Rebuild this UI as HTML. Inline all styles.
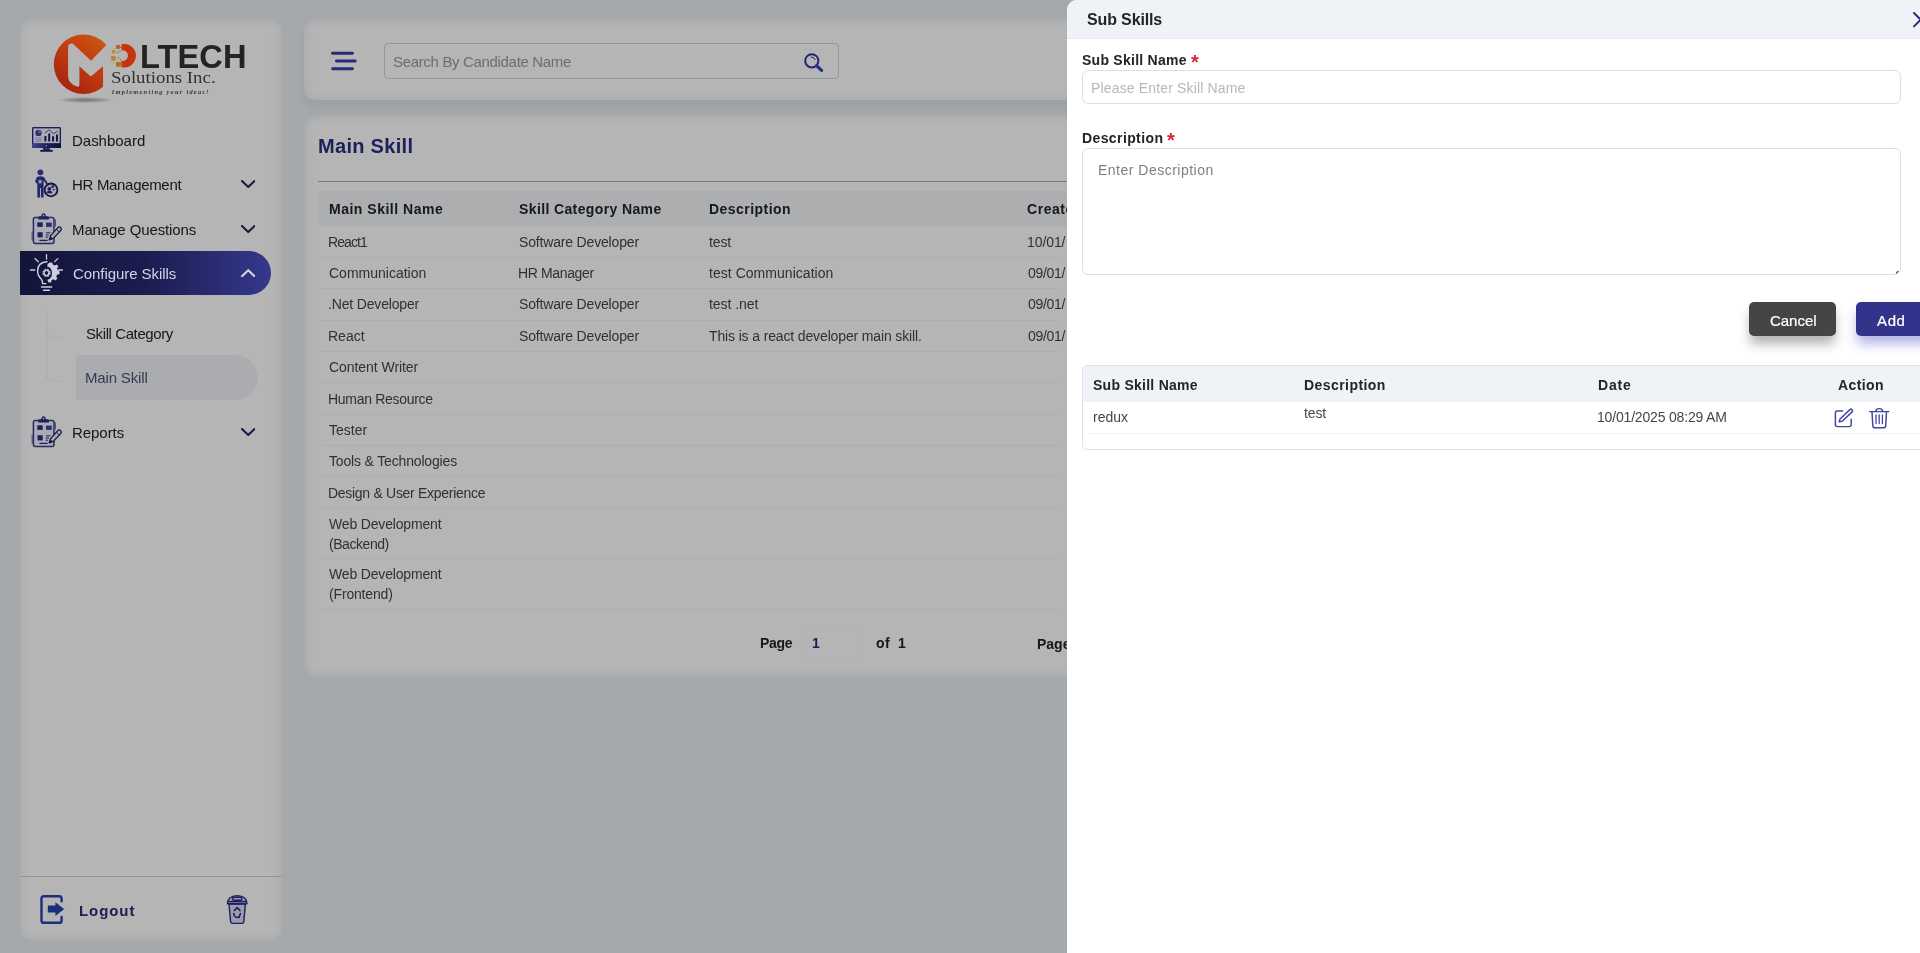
<!DOCTYPE html>
<html lang="en"><head><meta charset="utf-8"><title>Main Skill - Sub Skills</title>
<style>
*{box-sizing:border-box;margin:0;padding:0}
html,body{width:1920px;height:953px;overflow:hidden}
body{background:#e9eef3;font-family:'Liberation Sans',sans-serif;position:relative;color:#212529}
.t{position:absolute;white-space:nowrap;will-change:transform}
.abs{position:absolute}
.card{position:absolute;background:#fff;border-radius:10px;box-shadow:inset 0 0 10px 0 rgba(205,214,226,.55)}
#overlay{position:absolute;left:0;top:0;width:1920px;height:953px;background:rgba(0,0,0,.29)}
#panel{position:absolute;left:1067px;top:0;width:900px;height:953px;background:#fff;border-top-left-radius:10px;overflow:hidden}
.line{position:absolute;height:1px;background:#f4f4f6}
</style></head><body>
<aside id="sidebar">

<div class="card" style="left:20px;top:20px;width:262px;height:920px"></div>
<!-- active item -->
<div class="abs" style="left:20px;top:250.5px;width:251px;height:44.5px;border-radius:0 22.5px 22.5px 0;background:linear-gradient(90deg,#1c1d52 0%,#272970 50%,#4b50c6 100%)"></div>
<!-- sub active -->
<div class="abs" style="left:76px;top:355px;width:182px;height:45px;border-radius:0 22.5px 22.5px 0;background:#f1f2f7"></div>
<!-- tree lines -->
<svg class="abs" style="left:40px;top:305px" width="40" height="90" viewBox="0 0 40 90"><path d="M6.5 5 V25 Q6.5 33 14.5 33 H22 M6.5 25 V68 Q6.5 76 14.5 76 H22" fill="none" stroke="#f1f1f4" stroke-width="1.2"/></svg>
<div class="t" style="left:72.20px;top:129.70px;font-size:15px;line-height:21px;font-weight:400;color:#212529;letter-spacing:-0.017px;">Dashboard</div>
<div class="t" style="left:72.20px;top:173.90px;font-size:15px;line-height:21px;font-weight:400;color:#212529;letter-spacing:-0.318px;">HR Management</div>
<div class="t" style="left:72.20px;top:218.60px;font-size:15px;line-height:21px;font-weight:400;color:#212529;letter-spacing:-0.107px;">Manage Questions</div>
<div class="t" style="left:85.60px;top:323.30px;font-size:15px;line-height:21px;font-weight:400;color:#212529;letter-spacing:-0.403px;">Skill Category</div>
<div class="t" style="left:85.00px;top:367.20px;font-size:15px;line-height:21px;font-weight:400;color:#4d5274;letter-spacing:-0.161px;">Main Skill</div>
<div class="t" style="left:72.20px;top:421.60px;font-size:15px;line-height:21px;font-weight:400;color:#212529;letter-spacing:-0.054px;">Reports</div>
<svg class="abs" style="left:240.8px;top:180.3px" width="14.5" height="8.4" viewBox="0 0 14.5 8.4"><path d="M1 1 L7.25 7 L13.5 1" fill="none" stroke="#23265f" stroke-width="2.1" stroke-linecap="round" stroke-linejoin="round"/></svg>
<svg class="abs" style="left:240.8px;top:224.7px" width="14.5" height="8.4" viewBox="0 0 14.5 8.4"><path d="M1 1 L7.25 7 L13.5 1" fill="none" stroke="#23265f" stroke-width="2.1" stroke-linecap="round" stroke-linejoin="round"/></svg>
<svg class="abs" style="left:240.8px;top:427.6px" width="14.5" height="8.4" viewBox="0 0 14.5 8.4"><path d="M1 1 L7.25 7 L13.5 1" fill="none" stroke="#23265f" stroke-width="2.1" stroke-linecap="round" stroke-linejoin="round"/></svg>
<div class="abs" style="left:20px;top:876px;width:262px;height:1.3px;background:#d4d4d6"></div>
<div class="t" style="left:78.80px;top:899.70px;font-size:15px;line-height:21px;font-weight:700;color:#2a2d72;letter-spacing:0.917px;">Logout</div>


<!-- dashboard -->
<svg class="abs" style="left:28px;top:122px" width="40" height="34" viewBox="28 122 40 34">
<defs><linearGradient id="bz" x1="0" y1="0" x2="1" y2="0"><stop offset="0" stop-color="#5e61c6"/><stop offset="0.5" stop-color="#2b2e83"/><stop offset="1" stop-color="#14164c"/></linearGradient></defs>
<rect x="32" y="127" width="29" height="21" rx="1.4" fill="#2b2e83"/>
<rect x="33.4" y="128.4" width="26.2" height="15" fill="#f3f3ff"/>
<rect x="32" y="143.4" width="29" height="4.6" fill="url(#bz)"/>
<circle cx="46.4" cy="145.7" r="0.7" fill="#d6d6f2"/>
<path d="M43.4 148 H49.6 L50.6 150.2 H42.4 Z" fill="#3a3d9c"/>
<rect x="40.2" y="150" width="12.6" height="1.8" rx="0.6" fill="#1d1f5c"/>
<circle cx="38.5" cy="132.9" r="3.2" fill="#4145a8"/>
<path d="M38.5 132.9 V129.7 A3.2 3.2 0 0 1 41.7 132.9 Z" fill="#7f82d6"/>
<path d="M35.2 137.8 H41.6 M35.2 139.6 H41.6 M35.2 141.3 H41.6" stroke="#a9abdf" stroke-width="0.9"/>
<path d="M45.4 136 V141.4 M49.2 133.4 V141.4 M53.1 136.2 V141.4 M57 134.4 V141.4" stroke="#1d1f5c" stroke-width="2"/>
<path d="M44.6 133.2 L49 129.9 L53.4 133.6 L57.6 131.4" fill="none" stroke="#2b2e83" stroke-width="0.8"/>
</svg>
<!-- HR -->
<svg class="abs" style="left:28px;top:166px" width="40" height="36" viewBox="28 166 40 36">
<circle cx="40.4" cy="172.3" r="2.9" fill="#3a3fae"/>
<path d="M36.9 177 Q40.4 175.6 43.8 177 L48 183.6 L46.6 184.6 L43.6 180.6 V197.6 H40.9 V188 H40 V197.6 H37.3 V184 L35 181.6 Z" fill="#34389a"/>
<path d="M38.6 180 H41.6 V183.4 H38.6 Z" fill="#d9daf5"/>
<circle cx="51" cy="189.9" r="6.4" fill="#ececfc" stroke="#1d1f5c" stroke-width="1.8"/>
<circle cx="49.4" cy="188.8" r="1.9" fill="#2b2e83"/>
<circle cx="52.7" cy="186.6" r="1.4" fill="#2b2e83"/>
<circle cx="53.8" cy="189.6" r="0.9" fill="#2b2e83"/>
<path d="M46.4 193.2 Q46.6 190.8 49.4 190.8 Q52.2 190.8 52.6 193.2 Z" fill="#2b2e83"/>
</svg>

<svg class="abs" style="left:28px;top:208px" width="40" height="40" viewBox="28 208 40 40">
<rect x="31.4" y="231.5" width="2.4" height="9" fill="#9a9cd2"/>
<rect x="33.4" y="217.4" width="20.6" height="26" rx="1.8" fill="#f3f3ff" stroke="#3a3d8f" stroke-width="1.5"/>
<rect x="54.4" y="219.5" width="1.6" height="7" fill="#6c6fb8"/>
<path d="M38.3 219.6 V217.6 Q38.3 216.4 39.6 216.3 L41.3 216.2 Q41.6 213.2 43.6 213.2 Q45.6 213.2 45.9 216.2 L47.6 216.3 Q48.9 216.4 48.9 217.6 V219.6 Z" fill="#2b2e83"/>
<circle cx="43.6" cy="215.6" r="0.8" fill="#f3f3ff"/>
<rect x="37.3" y="222.3" width="5.4" height="4.6" fill="#2b2e83"/>
<rect x="46" y="222.6" width="5.8" height="4.3" fill="#3f43a0"/>
<rect x="37.5" y="232.2" width="5.2" height="5.2" fill="#2b2e83"/>
<path d="M46 232.8 H50.4 M45.6 235 H49 M45.6 237.2 H48" stroke="#2b2e83" stroke-width="1"/>
<path d="M39.4 240.4 H47.6" stroke="#2b2e83" stroke-width="1.3"/>
<path d="M49.2 239.9 L50.6 235.6 L57.8 227.6 Q59.4 226.2 60.8 227.6 Q62.1 229.1 60.7 230.6 L53.3 238.4 Z" fill="#ececfc" stroke="#1d1f5c" stroke-width="1.3" stroke-linejoin="round"/>
<path d="M49.2 239.9 L50.4 236.2 L52.8 238.6 Z" fill="#1d1f5c"/>
<path d="M56.4 229.2 L59.3 232" stroke="#1d1f5c" stroke-width="1"/>
</svg>

<svg class="abs" style="left:28px;top:411.1px" width="40" height="40" viewBox="28 208 40 40">
<rect x="31.4" y="231.5" width="2.4" height="9" fill="#9a9cd2"/>
<rect x="33.4" y="217.4" width="20.6" height="26" rx="1.8" fill="#f3f3ff" stroke="#3a3d8f" stroke-width="1.5"/>
<rect x="54.4" y="219.5" width="1.6" height="7" fill="#6c6fb8"/>
<path d="M38.3 219.6 V217.6 Q38.3 216.4 39.6 216.3 L41.3 216.2 Q41.6 213.2 43.6 213.2 Q45.6 213.2 45.9 216.2 L47.6 216.3 Q48.9 216.4 48.9 217.6 V219.6 Z" fill="#2b2e83"/>
<circle cx="43.6" cy="215.6" r="0.8" fill="#f3f3ff"/>
<rect x="37.3" y="222.3" width="5.4" height="4.6" fill="#2b2e83"/>
<rect x="46" y="222.6" width="5.8" height="4.3" fill="#3f43a0"/>
<rect x="37.5" y="232.2" width="5.2" height="5.2" fill="#2b2e83"/>
<path d="M46 232.8 H50.4 M45.6 235 H49 M45.6 237.2 H48" stroke="#2b2e83" stroke-width="1"/>
<path d="M39.4 240.4 H47.6" stroke="#2b2e83" stroke-width="1.3"/>
<path d="M49.2 239.9 L50.6 235.6 L57.8 227.6 Q59.4 226.2 60.8 227.6 Q62.1 229.1 60.7 230.6 L53.3 238.4 Z" fill="#ececfc" stroke="#1d1f5c" stroke-width="1.3" stroke-linejoin="round"/>
<path d="M49.2 239.9 L50.4 236.2 L52.8 238.6 Z" fill="#1d1f5c"/>
<path d="M56.4 229.2 L59.3 232" stroke="#1d1f5c" stroke-width="1"/>
</svg>
<!-- logout -->
<svg class="abs" style="left:36px;top:890px" width="34" height="38" viewBox="36 890 34 38">
<path d="M61.6 901.2 V898.6 Q61.6 896.2 59.2 896.2 H43.9 Q41.5 896.2 41.5 898.6 V920.4 Q41.5 922.8 43.9 922.8 H59.2 Q61.6 922.8 61.6 920.4 V917" fill="none" stroke="#2743b0" stroke-width="2.4" stroke-linecap="round"/>
<path d="M47.8 905.6 H55.4 V902.2 L64.2 909.1 L55.4 916 V912.6 H47.8 Z" fill="#2743b0"/>
</svg>
<!-- bin -->
<svg class="abs" style="left:222px;top:890px" width="30" height="38" viewBox="222 890 30 38">
<g fill="#dcdcf6" stroke="#2b2e83" stroke-width="1.4" stroke-linejoin="round">
<path d="M229 904 L230.6 921.6 Q230.8 923.4 232.6 923.4 H241.8 Q243.6 923.4 243.8 921.6 L245.4 904 Z"/>
<path d="M227.4 903.8 Q227.4 896 237.2 895.6 Q247 896 247 903.8 Z"/>
<rect x="232.4" y="897.2" width="9.6" height="3" rx="1.4"/>
</g>
<path d="M227.6 901.6 H246.8" stroke="#2b2e83" stroke-width="1.6"/>
<path d="M234 911 L237.2 907.6 L240.4 911 M240.6 913 L239 917.4 L235 917 M233.6 913 L234.6 916.6" fill="none" stroke="#1d1f5c" stroke-width="1.5"/>
</svg>

</aside>
<header id="topbar">

<div class="card" style="left:304px;top:20px;width:1600px;height:80px;box-shadow:inset 0 0 10px 0 rgba(205,214,226,.55),0 8px 10px rgba(120,135,150,.11)"></div>
<svg class="abs" style="left:330px;top:50px" width="28" height="22" viewBox="0 0 28 22"><g stroke="#383cab" stroke-width="2.9" stroke-linecap="round"><path d="M2.6 3.3H22.5"/><path d="M6.4 11H25.2"/><path d="M2.6 18.8H22.5"/></g></svg>
<div class="abs" style="left:384px;top:43px;width:455px;height:35.5px;border:1.4px solid #d3d3d6;border-radius:4px;background:#fff"></div>
<div class="t" style="left:393.00px;top:51.00px;font-size:15px;line-height:21px;font-weight:400;color:#9a9a9d;letter-spacing:-0.330px;">Search By Candidate Name</div>
<svg class="abs" style="left:802px;top:51px" width="24" height="24" viewBox="0 0 24 24"><circle cx="9.8" cy="9.8" r="6.6" fill="none" stroke="#2f379f" stroke-width="2"/><path d="M14.6 14.8 L19.6 19.4" stroke="#3a44c4" stroke-width="3.2" stroke-linecap="round"/><path d="M8.8 6 Q12.2 5.6 13.2 9" fill="none" stroke="#2d3186" stroke-width="1"/></svg>

</header>
<main id="content">

<div class="card" style="left:304.5px;top:115.5px;width:1600px;height:560px"></div>
<div class="t" style="left:317.60px;top:131.67px;font-size:20px;line-height:28px;font-weight:700;color:#2b2e7e;letter-spacing:0.301px;">Main Skill</div>
<div class="abs" style="left:318px;top:180.5px;width:1590px;height:1.3px;background:#a9abaf"></div>
<div class="abs" style="left:318px;top:190.6px;width:1590px;height:35.8px;background:#f4f5f8;border-radius:4px 0 0 0"></div>
<div class="t" style="left:328.60px;top:199.35px;font-size:14px;line-height:20px;font-weight:700;color:#212529;letter-spacing:0.507px;">Main Skill Name</div>
<div class="t" style="left:518.60px;top:199.35px;font-size:14px;line-height:20px;font-weight:700;color:#212529;letter-spacing:0.378px;">Skill Category Name</div>
<div class="t" style="left:709.00px;top:199.35px;font-size:14px;line-height:20px;font-weight:700;color:#212529;letter-spacing:0.454px;">Description</div>
<div class="t" style="left:1027.40px;top:199.35px;font-size:14px;line-height:20px;font-weight:700;color:#212529;letter-spacing:0.55px;">Created Date</div>
<div class="t" style="left:327.60px;top:231.75px;font-size:14px;line-height:20px;font-weight:400;color:#43464b;letter-spacing:-0.914px;">React1</div><div class="t" style="left:518.60px;top:231.75px;font-size:14px;line-height:20px;font-weight:400;color:#43464b;letter-spacing:-0.170px;">Software Developer</div><div class="t" style="left:709.00px;top:231.75px;font-size:14px;line-height:20px;font-weight:400;color:#43464b;letter-spacing:-0.125px;">test</div><div class="t" style="left:1026.80px;top:231.75px;font-size:14px;line-height:20px;font-weight:400;color:#43464b;letter-spacing:-0.087px;">10/01/</div><div class="line" style="left:321px;top:256.9px;width:737px"></div><div class="t" style="left:328.60px;top:263.11px;font-size:14px;line-height:20px;font-weight:400;color:#43464b;letter-spacing:0.002px;">Communication</div><div class="t" style="left:517.60px;top:263.11px;font-size:14px;line-height:20px;font-weight:400;color:#43464b;letter-spacing:-0.367px;">HR Manager</div><div class="t" style="left:709.00px;top:263.11px;font-size:14px;line-height:20px;font-weight:400;color:#43464b;letter-spacing:0.039px;">test Communication</div><div class="t" style="left:1027.80px;top:263.11px;font-size:14px;line-height:20px;font-weight:400;color:#43464b;letter-spacing:-0.287px;">09/01/</div><div class="line" style="left:321px;top:288.2px;width:737px"></div><div class="t" style="left:327.60px;top:294.47px;font-size:14px;line-height:20px;font-weight:400;color:#43464b;letter-spacing:-0.163px;">.Net Developer</div><div class="t" style="left:518.60px;top:294.47px;font-size:14px;line-height:20px;font-weight:400;color:#43464b;letter-spacing:-0.170px;">Software Developer</div><div class="t" style="left:709.00px;top:294.47px;font-size:14px;line-height:20px;font-weight:400;color:#43464b;letter-spacing:-0.040px;">test .net</div><div class="t" style="left:1027.80px;top:294.47px;font-size:14px;line-height:20px;font-weight:400;color:#43464b;letter-spacing:-0.287px;">09/01/</div><div class="line" style="left:321px;top:319.6px;width:737px"></div><div class="t" style="left:327.60px;top:325.83px;font-size:14px;line-height:20px;font-weight:400;color:#43464b;">React</div><div class="t" style="left:518.60px;top:325.83px;font-size:14px;line-height:20px;font-weight:400;color:#43464b;letter-spacing:-0.170px;">Software Developer</div><div class="t" style="left:709.00px;top:325.83px;font-size:14px;line-height:20px;font-weight:400;color:#43464b;letter-spacing:-0.138px;">This is a react developer main skill.</div><div class="t" style="left:1027.80px;top:325.83px;font-size:14px;line-height:20px;font-weight:400;color:#43464b;letter-spacing:-0.287px;">09/01/</div><div class="line" style="left:321px;top:350.9px;width:737px"></div><div class="t" style="left:328.60px;top:357.19px;font-size:14px;line-height:20px;font-weight:400;color:#43464b;letter-spacing:-0.056px;">Content Writer</div><div class="line" style="left:321px;top:382.3px;width:737px"></div><div class="t" style="left:327.60px;top:388.55px;font-size:14px;line-height:20px;font-weight:400;color:#43464b;letter-spacing:-0.296px;">Human Resource</div><div class="line" style="left:321px;top:413.7px;width:737px"></div><div class="t" style="left:328.60px;top:419.91px;font-size:14px;line-height:20px;font-weight:400;color:#43464b;">Tester</div><div class="line" style="left:321px;top:445.0px;width:737px"></div><div class="t" style="left:328.60px;top:451.27px;font-size:14px;line-height:20px;font-weight:400;color:#43464b;letter-spacing:-0.164px;">Tools &amp; Technologies</div><div class="line" style="left:321px;top:476.4px;width:737px"></div><div class="t" style="left:327.60px;top:482.63px;font-size:14px;line-height:20px;font-weight:400;color:#43464b;letter-spacing:-0.291px;">Design &amp; User Experience</div><div class="line" style="left:321px;top:507.7px;width:737px"></div><div class="t" style="left:328.60px;top:513.55px;font-size:14px;line-height:20px;font-weight:400;color:#43464b;letter-spacing:-0.166px;">Web Development</div><div class="t" style="left:329.20px;top:533.55px;font-size:14px;line-height:20px;font-weight:400;color:#43464b;letter-spacing:-0.443px;">(Backend)</div><div class="line" style="left:321px;top:558.4px;width:737px"></div><div class="t" style="left:328.60px;top:563.95px;font-size:14px;line-height:20px;font-weight:400;color:#43464b;letter-spacing:-0.166px;">Web Development</div><div class="t" style="left:329.20px;top:583.95px;font-size:14px;line-height:20px;font-weight:400;color:#43464b;letter-spacing:-0.166px;">(Frontend)</div><div class="line" style="left:321px;top:609.3px;width:737px"></div><div class="t" style="left:759.60px;top:633.45px;font-size:14px;line-height:20px;font-weight:700;color:#212529;letter-spacing:-0.292px;">Page</div><div class="t" style="left:811.50px;top:633.45px;font-size:14px;line-height:20px;font-weight:700;color:#2b2e7e;">1</div><div class="t" style="left:875.60px;top:633.45px;font-size:14px;line-height:20px;font-weight:700;color:#212529;letter-spacing:0.448px;">of</div><div class="t" style="left:898.00px;top:633.45px;font-size:14px;line-height:20px;font-weight:700;color:#212529;">1</div><div class="t" style="left:1036.50px;top:634.45px;font-size:14px;line-height:20px;font-weight:700;color:#212529;">Page Size</div><div class="abs" style="left:802px;top:624px;width:61px;height:35px;border:1px solid #fafafb;border-radius:4px"></div>
</main>
<div id="overlay"></div>
<div id="brand">

<svg class="abs" style="left:40px;top:25px" width="220" height="85" viewBox="40 25 220 85">
<defs>
<linearGradient id="lg1" x1="0.9" y1="0" x2="0.15" y2="1"><stop offset="0" stop-color="#c85c14"/><stop offset="0.4" stop-color="#c44010"/><stop offset="1" stop-color="#a42010"/></linearGradient>
<radialGradient id="sh" cx="0.5" cy="0.5" r="0.5"><stop offset="0" stop-color="#000" stop-opacity=".36"/><stop offset="0.6" stop-color="#000" stop-opacity=".18"/><stop offset="1" stop-color="#000" stop-opacity="0"/></radialGradient>
</defs>
<ellipse cx="85.5" cy="100" rx="28" ry="3" fill="url(#sh)"/>
<mask id="mk"><rect x="40" y="25" width="220" height="85" fill="#fff"/><path d="M72.7 43.6 L91 60.7 L106.3 45 L118 40 L118 100 L103 100 L103 66.2 L90.8 76.4 L79.4 66.2 L79.4 85 Q79.4 87.4 77 86.6 Q68.1 83.6 68.1 76 V47.5 Q68.1 43 72.7 43.6 Z" fill="#000"/></mask>
<circle cx="83.6" cy="64.3" r="29.8" fill="url(#lg1)" mask="url(#mk)"/>
<path d="M121.5 44.2 A11.8 11.8 0 1 1 121.5 67.2 L121.5 61 A5.4 5.4 0 1 0 121.5 50.4 Z" fill="#c6340f"/>
<rect x="116" y="45" width="3.9" height="3.9" fill="#b3632e"/>
<rect x="111.9" y="50" width="3.5" height="3.5" fill="#bd8a34"/>
<rect x="111.2" y="56" width="4.3" height="4.7" fill="#b98628"/>
<rect x="116" y="62" width="5" height="4.8" fill="#be6c1e"/>
<rect x="120.2" y="46.6" width="1.3" height="1.3" fill="#a8501e"/><rect x="119.4" y="50.4" width="1.2" height="1.2" fill="#9a6a28"/>
<rect x="117.2" y="51.8" width="1.3" height="1.3" fill="#8a6a30"/><rect x="117.8" y="57.2" width="1.3" height="1.3" fill="#9a7030"/>
<rect x="120" y="59.2" width="1.3" height="1.3" fill="#a86428"/><rect x="113.4" y="47.8" width="1.1" height="1.1" fill="#b08a50"/><rect x="113.4" y="62.6" width="1.1" height="1.1" fill="#b08a50"/>
<text x="140.1" y="67.7" font-family="'Liberation Sans',sans-serif" font-weight="700" font-size="33" fill="#262223" textLength="106.4" lengthAdjust="spacingAndGlyphs">LTECH</text>
<text x="111" y="83.4" font-family="'Liberation Serif',serif" font-size="17" fill="#353132" textLength="104.6" lengthAdjust="spacingAndGlyphs">Solutions Inc.</text>
<text x="111.8" y="94" font-family="'Liberation Serif',serif" font-style="italic" font-weight="700" font-size="6.4" fill="#3a2f30" textLength="96.8" lengthAdjust="spacing">Implementing your ideas!</text>
</svg>


<div class="t" style="left:72.90px;top:263.30px;font-size:15px;line-height:21px;font-weight:400;color:#d3d4e2;letter-spacing:-0.061px;">Configure Skills</div>
<svg class="abs" style="left:240.8px;top:268.7px" width="14.5" height="8.4" viewBox="0 0 14.5 8.4"><path d="M1 7.2 L7.25 1.2 L13.5 7.2" fill="none" stroke="#d3d4e2" stroke-width="2.1" stroke-linecap="round" stroke-linejoin="round"/></svg>

<!-- bulb -->
<svg class="abs" style="left:28px;top:251px" width="38" height="44" viewBox="28 251 38 44">
<g fill="none" stroke="#cfd0de" stroke-linecap="round">
<path d="M46.5 254.6 V259.2 M34.9 258.6 L38.4 261.8 M57.8 258.6 L54.6 261.6 M30.4 270 H34.8 M58 270 H62.4" stroke-width="1.3"/>
<path d="M47 261.8 Q37.6 262.4 37.6 271 Q37.6 275.6 41.2 279 Q42.6 280.6 42.6 283.6 H46" stroke-width="1.4"/>
<path d="M41.6 287 H51.6 M43.6 290.2 H49.4" stroke-width="1.6"/>
</g>
<path d="M49.5 262.6 L52.2 262.4 L52.8 264.6 L54.8 265.6 L56.8 264.4 L58.4 266.6 L57 268.4 L57.6 270.6 L59.6 271.4 L59.4 274.2 L57.2 274.6 L56.2 276.6 L57.4 278.6 L55.4 280.4 L53.6 279.2 L51.6 280 L51 282.4 L48.2 282.2 L47.4 279.8 Q52 278.6 52 273 Q52 267.6 47.2 266.4 L47.6 264.2 Z" fill="#cfd0de"/>
<circle cx="46.5" cy="272.9" r="3.1" fill="none" stroke="#cfd0de" stroke-width="2" stroke-dasharray="1.7 0.75"/>
<circle cx="46.5" cy="272.9" r="2.4" fill="none" stroke="#cfd0de" stroke-width="1.1"/>
</svg>

</div>
<section id="offcanvas">

<div id="panel">
<div class="abs" style="left:0;top:0;width:900px;height:39px;background:#eff3f7;border-bottom:1px solid #e6eaee"></div>
<div class="t" style="left:20.40px;top:8.66px;font-size:16px;line-height:22px;font-weight:700;color:#212529;letter-spacing:-0.141px;">Sub Skills</div>
<svg class="abs" style="left:846.2px;top:12.2px" width="16" height="16" viewBox="0 0 16 16"><path d="M1 1 L14.4 14.4 M14.4 1 L1 14.4" stroke="#2b2d6e" stroke-width="2" stroke-linecap="round"/></svg>
<div class="t" style="left:15.30px;top:49.55px;font-size:14px;line-height:20px;font-weight:700;color:#212529;letter-spacing:0.257px;">Sub Skill Name</div>
<div class="t" style="left:124.00px;top:47.67px;font-size:20px;line-height:28px;font-weight:700;color:#d9263a;">*</div>
<div class="abs" style="left:15px;top:70.2px;width:818.6px;height:34.2px;border:1px solid #dcdfe3;border-radius:6px;background:#fff"></div>
<div class="t" style="left:23.50px;top:77.55px;font-size:14px;line-height:20px;font-weight:400;color:#b4b8bd;letter-spacing:0.152px;">Please Enter Skill Name</div>
<div class="t" style="left:15.30px;top:127.75px;font-size:14px;line-height:20px;font-weight:700;color:#212529;letter-spacing:0.394px;">Description</div>
<div class="t" style="left:100.00px;top:125.87px;font-size:20px;line-height:28px;font-weight:700;color:#d9263a;">*</div>
<div class="abs" style="left:15px;top:148px;width:818.6px;height:127.4px;border:1px solid #dcdfe3;border-radius:6px;background:#fff"></div>
<svg class="abs" style="left:822px;top:264px" width="10" height="10" viewBox="0 0 10 10"><path d="M9.4 7 L7 9.4" stroke="#444" stroke-width="1.1"/></svg>
<div class="t" style="left:30.70px;top:159.75px;font-size:14px;line-height:20px;font-weight:400;color:#7b7f85;letter-spacing:0.494px;">Enter Description</div>
<div class="abs" style="left:682px;top:302.2px;width:87px;height:34px;border-radius:5px;background:#454545;box-shadow:0 9px 12px -1px rgba(0,0,0,.30)"></div>
<div class="t" style="left:702.50px;top:309.80px;font-size:15px;line-height:21px;font-weight:400;color:#ffffff;letter-spacing:-0.032px;-webkit-text-stroke:0.22px #fff;">Cancel</div>
<div class="abs" style="left:789px;top:302.2px;width:87px;height:34px;border-radius:5px;background:#31348a;box-shadow:0 9px 12px -1px rgba(60,64,190,.38)"></div>
<div class="t" style="left:810.00px;top:309.80px;font-size:15px;line-height:21px;font-weight:400;color:#ffffff;letter-spacing:0.626px;-webkit-text-stroke:0.22px #fff;">Add</div>
<div class="abs" style="left:15.299999999999955px;top:365px;width:880px;height:85.4px;border:1px solid #dde1e5;border-radius:5px;background:#fff;overflow:hidden">
  <div class="abs" style="left:0;top:0;width:880px;height:35.6px;background:#eff2f6"></div>
</div>
<div class="t" style="left:26.20px;top:374.85px;font-size:14px;line-height:20px;font-weight:700;color:#212529;letter-spacing:0.265px;">Sub Skill Name</div>
<div class="t" style="left:236.60px;top:374.85px;font-size:14px;line-height:20px;font-weight:700;color:#212529;letter-spacing:0.434px;">Description</div>
<div class="t" style="left:530.80px;top:374.85px;font-size:14px;line-height:20px;font-weight:700;color:#212529;letter-spacing:0.814px;">Date</div>
<div class="t" style="left:771.00px;top:374.85px;font-size:14px;line-height:20px;font-weight:700;color:#212529;letter-spacing:0.400px;">Action</div>
<div class="t" style="left:26.20px;top:407.45px;font-size:14px;line-height:20px;font-weight:400;color:#43464b;letter-spacing:-0.005px;">redux</div>
<div class="t" style="left:236.60px;top:402.85px;font-size:14px;line-height:20px;font-weight:400;color:#43464b;letter-spacing:-0.125px;">test</div>
<div class="t" style="left:529.80px;top:407.45px;font-size:14px;line-height:20px;font-weight:400;color:#43464b;letter-spacing:-0.179px;">10/01/2025 08:29 AM</div>
<div class="abs" style="left:21px;top:433.2px;width:880px;height:1px;background:#eff0f2"></div>
<svg class="abs" style="left:766px;top:407px" width="22" height="22" viewBox="0 0 22 22"><g fill="none" stroke="#4145a4" stroke-width="1.45" stroke-linecap="round" stroke-linejoin="round"><path d="M9.6 3.9 H4.4 Q2.4 3.9 2.4 5.9 V17.6 Q2.4 19.6 4.4 19.6 H16.2 Q18.2 19.6 18.2 17.6 V12.3"/><path d="M16.9 2.6 Q18 1.6 19.1 2.7 Q20.1 3.8 19.1 4.9 L9.2 14.2 L6.2 14.9 L7 12 Z"/></g></svg>
<svg class="abs" style="left:801px;top:406px" width="24" height="24" viewBox="0 0 24 24"><g fill="none" stroke="#4145a4" stroke-width="1.45" stroke-linecap="round" stroke-linejoin="round"><path d="M1.6 5.6 H20.9"/><path d="M7.8 5.4 Q8 2.6 11.2 2.6 Q14.5 2.6 14.7 5.4"/><path d="M4 5.8 L4.8 19.6 Q5 21.8 7.2 21.8 H15.4 Q17.5 21.8 17.7 19.6 L18.5 5.8"/><path d="M8 9 V17.6 M11.2 9 V17.6 M14.4 9 V17.6" stroke-width="1.3"/></g></svg>
</div>

</section>
</body></html>
